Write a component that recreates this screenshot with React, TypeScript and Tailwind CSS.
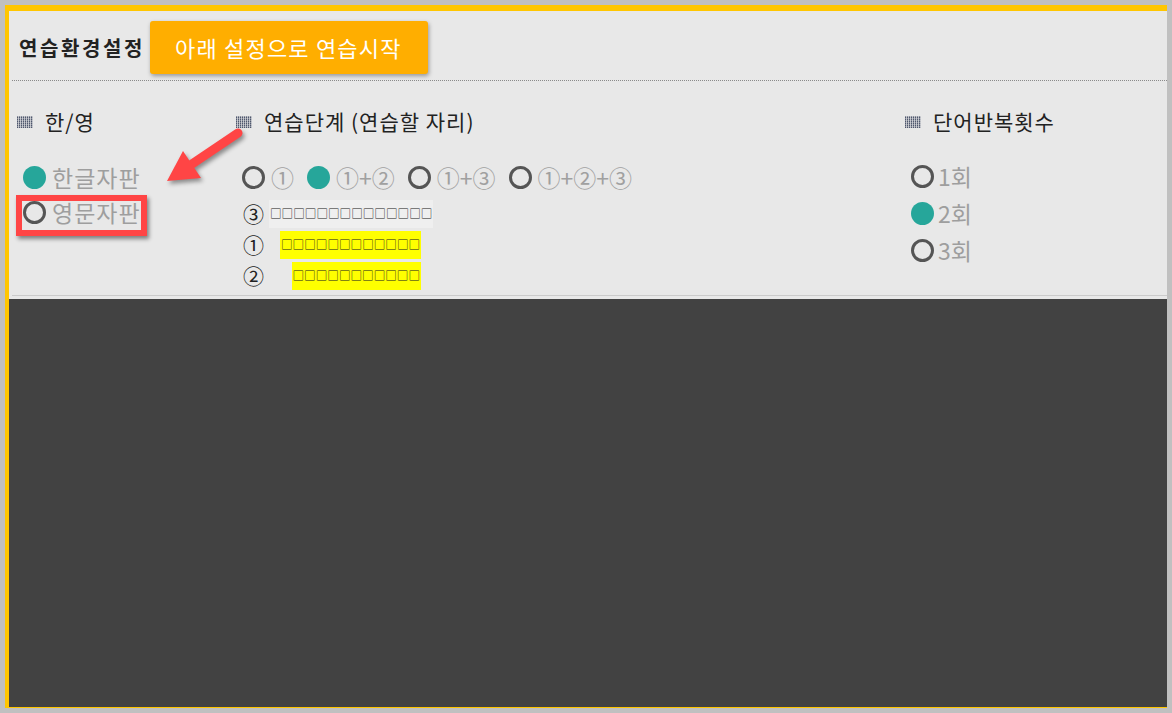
const font = { fontFamily: '"Noto Sans CJK KR", "Noto Sans", sans-serif' };

const GridIcon = () => (
  <svg width="16" height="13" viewBox="0 0 16 13" className="shrink-0">
    {[0, 1, 2, 3, 4, 5].map((r) =>
      [0, 1, 2, 3, 4, 5, 6, 7].map((c) => (
        <rect key={r + "-" + c} x={c * 2} y={r * 2 + 0.5} width="1.3" height="1.3" fill="#2a3550" />
      ))
    )}
  </svg>
);

const Heading = ({ label }: { label: string }) => (
  <div className="flex h-[28px] items-center gap-[12px] text-[21px] tracking-[1px] text-[#222]">
    <GridIcon />
    <span>{label}</span>
  </div>
);

const Radio = ({ on }: { on?: boolean }) =>
  on ? (
    <span className="inline-block h-[23px] w-[23px] shrink-0 rounded-full bg-[#26a69a]" />
  ) : (
    <span className="inline-block h-[23px] w-[23px] shrink-0 rounded-full border-[3px] border-[#555]" />
  );

const Boxes = ({ n }: { n: number }) => (
  <span className="text-[11.6px] leading-none text-[#222]">{"□".repeat(n)}</span>
);

export default function App() {
  return (
    <div className="relative h-[713px] w-[1172px] bg-[#c0c0c0] px-[5px] pt-[5px]" style={font}>
      <div className="flex h-[703px] flex-col border-t-[6px] border-b border-l-4 border-[#ffc600] bg-[#e8e8e8]">
        {/* 상단 */}
        <div className="flex h-[69px] items-center pl-[10px] pt-[4px]">
          <span className="text-[20px] font-bold tracking-[2.6px] text-[#222]">연습환경설정</span>
          <button className="ml-[5px] h-[53px] rounded-[3px] bg-[#ffae00] pl-[25px] pr-[26px] text-[22px] tracking-[1.2px] text-white shadow-[1px_2px_4px_rgba(0,0,0,0.35)]">
            아래 설정으로 연습시작
          </button>
        </div>
        <div className="ml-[3px] border-b border-dotted border-[#8a8a8a]" />

        {/* 설정 */}
        <div className="flex h-[214px] pt-[27px]">
          {/* 한/영 */}
          <div className="w-[227px] pl-[8px]">
            <Heading label="한/영" />
            <div className="mt-[24px] flex flex-col pl-[6px] text-[23px] tracking-[1px] text-[#9e9e9e]">
              <div className="flex h-[35px] items-center gap-[6px]">
                <Radio on />
                <span>한글자판</span>
              </div>
              <div className="flex h-[35px] items-center gap-[6px]">
                <Radio />
                <span>영문자판</span>
              </div>
            </div>
          </div>

          {/* 연습단계 */}
          <div className="w-[669px]">
            <Heading label="연습단계 (연습할 자리)" />
            <div className="mt-[26px] flex h-[30px] items-center gap-[13px] pl-[6px] text-[23px] text-[#a0a0a0]">
              <div className="flex items-center gap-[6px]">
                <Radio />
                <span>①</span>
              </div>
              <div className="flex items-center gap-[6px]">
                <Radio on />
                <span>①+②</span>
              </div>
              <div className="flex items-center gap-[6px]">
                <Radio />
                <span>①+③</span>
              </div>
              <div className="flex items-center gap-[6px]">
                <Radio />
                <span>①+②+③</span>
              </div>
            </div>
            <div className="mt-[8px] flex flex-col gap-[3px] pl-[7px] text-[21px] text-[#222]">
              <div className="flex h-[28px] items-center">
                <span className="w-[26px]">③</span>
                <span className="flex h-[28px] items-center bg-[#efefef] px-[1px]">
                  <Boxes n={14} />
                </span>
              </div>
              <div className="flex h-[28px] items-center">
                <span className="w-[37px]">①</span>
                <span className="flex h-[28px] items-center bg-[#ffff00] px-[1px]">
                  <Boxes n={12} />
                </span>
              </div>
              <div className="flex h-[28px] items-center">
                <span className="w-[49px]">②</span>
                <span className="flex h-[28px] items-center bg-[#ffff00] px-[0.5px]">
                  <Boxes n={11} />
                </span>
              </div>
            </div>
          </div>

          {/* 단어반복횟수 */}
          <div className="flex-1">
            <Heading label="단어반복횟수" />
            <div className="mt-[22px] flex flex-col pl-[6px] text-[23px] text-[#9e9e9e]">
              {["1회", "2회", "3회"].map((t, i) => (
                <div key={t} className="flex h-[37px] items-center gap-[4px]">
                  <Radio on={i === 1} />
                  <span>{t}</span>
                </div>
              ))}
            </div>
          </div>
        </div>
        <div className="ml-[3px] border-b border-[#cbcbcb]" />
        <div className="h-[3px]" />

        {/* 연습 화면 */}
        <div className="flex-1 bg-[#424242]" />
      </div>

      {/* 강조 표시 */}
      <div className="absolute left-[16px] top-[195px] h-[41px] w-[131px] border-[6px] border-[#ff4545] shadow-[2px_3px_4px_rgba(0,0,0,0.45)]" />
      <svg
        className="pointer-events-none absolute left-0 top-0 drop-shadow-[2px_3px_2px_rgba(0,0,0,0.4)]"
        width="1172"
        height="713"
      >
        <line x1="238" y1="133" x2="192" y2="164" stroke="#ff4545" strokeWidth="9" strokeLinecap="round" />
        <polygon points="167,181 183,151 201,178" fill="#ff4545" />
      </svg>
    </div>
  );
}
